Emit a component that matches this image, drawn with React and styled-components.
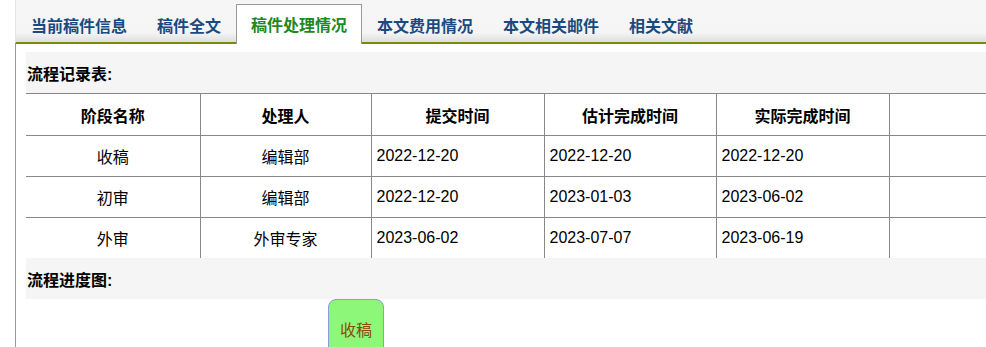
import React from 'react';
import styled, { createGlobalStyle } from 'styled-components';

const GlobalStyle = createGlobalStyle`
  html, body {
    margin: 0;
    padding: 0;
    background: #fff;
    overflow: hidden;
  }
  body {
    font-family: 'Liberation Sans', 'Noto Sans CJK SC', sans-serif;
    font-size: 16px;
    color: #000;
  }
`;

const Page = styled.div`
  margin-left: 15px;
  height: 347px;
  overflow: hidden;
`;

const TabBar = styled.div`
  display: flex;
  align-items: flex-end;
  height: 42px;
  background: linear-gradient(to bottom, #f6f6f6 0%, #f5f5f5 78%, #dedede 100%);
  border-bottom: 2px solid #7b8a0e;
  border-left: 1px solid #e4e4e4;
`;

const Tab = styled.div`
  height: ${p => (p.$active ? '37px' : '38px')};
  display: flex;
  align-items: center;
  padding: 0 14px;
  font-weight: bold;
  font-size: 16px;
  color: ${p => (p.$active ? '#1d8a1d' : '#1b4a80')};
  background: ${p => (p.$active ? '#fff' : 'transparent')};
  border: 1px solid ${p => (p.$active ? '#999' : 'transparent')};
  border-bottom: none;
  margin-bottom: -2px;
  padding-bottom: ${p => (p.$active ? '2px' : '0')};
`;

const Content = styled.div`
  border-left: 1px solid #999;
  padding: 8px 0 0 10px;
  height: 300px;
`;

const SectionTitle = styled.div`
  background: #f5f5f5;
  height: 41px;
  display: flex;
  align-items: center;
  padding-left: 1px;
  font-weight: bold;
  font-size: 16px;
`;

const Table = styled.table`
  border-collapse: collapse;
  table-layout: fixed;
  width: 100%;
`;

const HeadCell = styled.th`
  height: 41px;
  padding: 0;
  font-weight: bold;
  font-size: 16px;
  text-align: center;
  border-top: 1px solid #888;
  border-left: ${p => (p.$first ? 'none' : '1px solid #888')};
`;

const Cell = styled.td`
  height: 40px;
  padding: 0 0 0 ${p => (p.$center ? '0' : '5px')};
  font-size: 16px;
  text-align: ${p => (p.$center ? 'center' : 'left')};
  border-top: 1px solid #888;
  border-left: ${p => (p.$first ? 'none' : '1px solid #888')};
`;

const Chart = styled.div`
  display: flex;
  padding-left: 302px;
`;

const StageBox = styled.div`
  width: 56px;
  height: 60px;
  box-sizing: border-box;
  padding-top: 17px;
  text-align: center;
  background: #8df77a;
  border: 1px solid #8a9ed4;
  border-radius: 8px;
  color: #8b4a0a;
  font-size: 16px;
`;

const tabs = ['当前稿件信息', '稿件全文', '稿件处理情况', '本文费用情况', '本文相关邮件', '相关文献'];

const columns = [
  { title: '阶段名称', width: 174 },
  { title: '处理人', width: 171 },
  { title: '提交时间', width: 173 },
  { title: '估计完成时间', width: 172 },
  { title: '实际完成时间', width: 173 },
  { title: '' },
];

const rows = [
  ['收稿', '编辑部', '2022-12-20', '2022-12-20', '2022-12-20'],
  ['初审', '编辑部', '2022-12-20', '2023-01-03', '2023-06-02'],
  ['外审', '外审专家', '2023-06-02', '2023-07-07', '2023-06-19'],
];

export default function App() {
  return (
    <>
      <GlobalStyle />
      <Page>
        <TabBar>
          {tabs.map((t, i) => (
            <Tab key={t} $active={i === 2}>{t}</Tab>
          ))}
        </TabBar>
        <Content>
          <SectionTitle>流程记录表:</SectionTitle>
          <Table>
            <colgroup>
              {columns.map((c, i) => <col key={i} style={c.width ? { width: c.width } : undefined} />)}
            </colgroup>
            <thead>
              <tr>
                {columns.map((c, i) => (
                  <HeadCell key={i} $first={i === 0}>{c.title}</HeadCell>
                ))}
              </tr>
            </thead>
            <tbody>
              {rows.map((r, ri) => (
                <tr key={ri}>
                  {r.map((v, ci) => (
                    <Cell key={ci} $first={ci === 0} $center={ci < 2}>{v}</Cell>
                  ))}
                  <Cell />
                </tr>
              ))}
            </tbody>
          </Table>
          <SectionTitle>流程进度图:</SectionTitle>
          <Chart>
            <StageBox>收稿</StageBox>
          </Chart>
        </Content>
      </Page>
    </>
  );
}
